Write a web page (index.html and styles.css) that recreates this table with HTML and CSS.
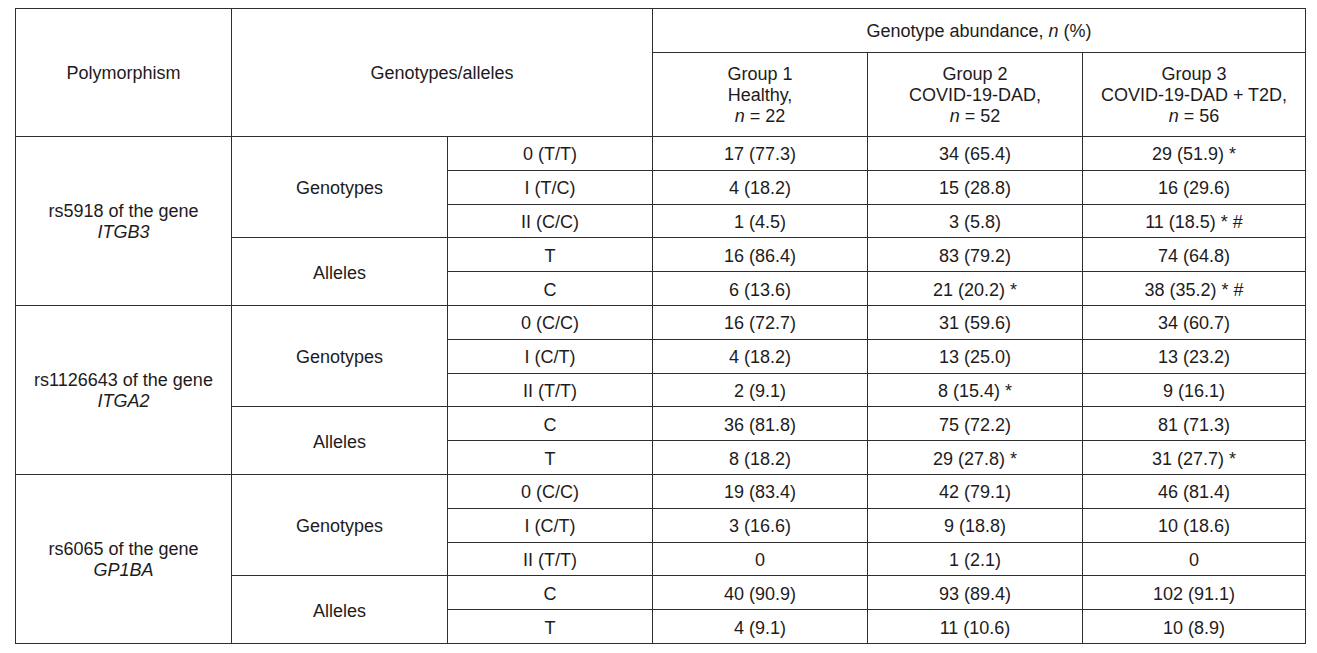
FILE: index.html
```html
<!DOCTYPE html>
<html lang="en">
<head>
<meta charset="utf-8">
<title>Genotype abundance</title>
<link rel="stylesheet" href="styles.css">
</head>
<body>
<table class="gt">
  <colgroup>
    <col class="c-poly">
    <col class="c-kind">
    <col class="c-geno">
    <col class="c-g1">
    <col class="c-g2">
    <col class="c-g3">
  </colgroup>
  <thead>
    <tr class="h1">
      <th rowspan="2">Polymorphism</th>
      <th rowspan="2" colspan="2">Genotypes/alleles</th>
      <th colspan="3">Genotype abundance, <i>n</i> (%)</th>
    </tr>
    <tr class="h2">
      <th>Group 1<br>Healthy,<br><i>n</i> = 22</th>
      <th>Group 2<br>COVID-19-DAD,<br><i>n</i> = 52</th>
      <th>Group 3<br>COVID-19-DAD + T2D,<br><i>n</i> = 56</th>
    </tr>
  </thead>
  <tbody>
    <tr>
      <td rowspan="5">rs5918 of the gene<br><i>ITGB3</i></td>
      <td rowspan="3">Genotypes</td>
      <td>0 (T/T)</td><td>17 (77.3)</td><td>34 (65.4)</td><td>29 (51.9) *</td>
    </tr>
    <tr><td>I (T/C)</td><td>4 (18.2)</td><td>15 (28.8)</td><td>16 (29.6)</td></tr>
    <tr><td>II (C/C)</td><td>1 (4.5)</td><td>3 (5.8)</td><td>11 (18.5) * #</td></tr>
    <tr>
      <td rowspan="2">Alleles</td>
      <td>T</td><td>16 (86.4)</td><td>83 (79.2)</td><td>74 (64.8)</td>
    </tr>
    <tr><td>C</td><td>6 (13.6)</td><td>21 (20.2) *</td><td>38 (35.2) * #</td></tr>

    <tr>
      <td rowspan="5">rs1126643 of the gene<br><i>ITGA2</i></td>
      <td rowspan="3">Genotypes</td>
      <td>0 (C/C)</td><td>16 (72.7)</td><td>31 (59.6)</td><td>34 (60.7)</td>
    </tr>
    <tr><td>I (C/T)</td><td>4 (18.2)</td><td>13 (25.0)</td><td>13 (23.2)</td></tr>
    <tr><td>II (T/T)</td><td>2 (9.1)</td><td>8 (15.4) *</td><td>9 (16.1)</td></tr>
    <tr>
      <td rowspan="2">Alleles</td>
      <td>C</td><td>36 (81.8)</td><td>75 (72.2)</td><td>81 (71.3)</td>
    </tr>
    <tr><td>T</td><td>8 (18.2)</td><td>29 (27.8) *</td><td>31 (27.7) *</td></tr>

    <tr>
      <td rowspan="5">rs6065 of the gene<br><i>GP1BA</i></td>
      <td rowspan="3">Genotypes</td>
      <td>0 (C/C)</td><td>19 (83.4)</td><td>42 (79.1)</td><td>46 (81.4)</td>
    </tr>
    <tr><td>I (C/T)</td><td>3 (16.6)</td><td>9 (18.8)</td><td>10 (18.6)</td></tr>
    <tr><td>II (T/T)</td><td>0</td><td>1 (2.1)</td><td>0</td></tr>
    <tr>
      <td rowspan="2">Alleles</td>
      <td>C</td><td>40 (90.9)</td><td>93 (89.4)</td><td>102 (91.1)</td>
    </tr>
    <tr><td>T</td><td>4 (9.1)</td><td>11 (10.6)</td><td>10 (8.9)</td></tr>
  </tbody>
</table>
</body>
</html>
```

FILE: styles.css
```css
html, body {
  margin: 0;
  padding: 0;
  background: #ffffff;
}

body {
  padding: 8px 0 0 15px;
  font-family: "Liberation Sans", Arial, sans-serif;
  font-size: 18px;
  color: #1e1b1c;
}

.gt {
  border-collapse: collapse;
  table-layout: fixed;
  width: 1290px;
}

.c-poly { width: 216px; }
.c-kind { width: 216px; }
.c-geno { width: 205px; }
.c-g1   { width: 215px; }
.c-g2   { width: 215px; }
.c-g3   { width: 223px; }

.gt th,
.gt td {
  border: 1.7px solid #2e2e2e;
  padding: 0;
  text-align: center;
  vertical-align: middle;
  font-weight: normal;
  line-height: 21px;
}

.gt thead th {
  padding-top: 2px;
}

.gt tbody td {
  padding-top: 3px;
}

.gt .h1 { height: 44px; }
.gt .h2 { height: 84px; }
.gt tbody tr { height: 33.8px; }

.gt i { font-style: italic; }
```
